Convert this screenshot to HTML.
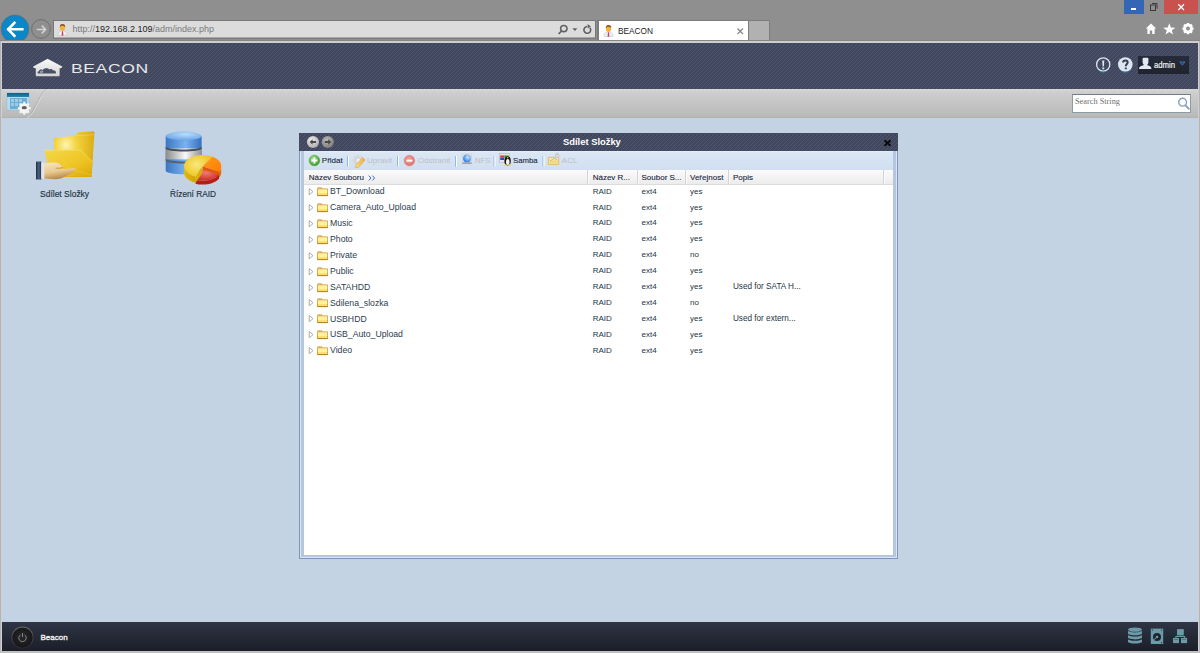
<!DOCTYPE html>
<html><head><meta charset="utf-8">
<style>
*{margin:0;padding:0;box-sizing:border-box}
html,body{width:1200px;height:653px;overflow:hidden}
body{position:relative;background:#8f8f8f;font-family:"Liberation Sans",sans-serif}
.a{position:absolute}
.t{white-space:nowrap}
#lightline{left:0;top:41px;width:1200px;height:2px;background:#cdcdcd}
#lb{left:0;top:41px;width:1px;height:612px;background:#b4b4b4}
#lb2{left:1px;top:43px;width:1px;height:610px;background:#cdd0d4}
#rb{left:1198px;top:43px;width:1px;height:610px;background:#cdd0d4}
#rb2{left:1199px;top:41px;width:1px;height:612px;background:#b4b4b4}
.stripes{background-color:#41485d;background-image:linear-gradient(135deg,#4d5570 0%,#4d5570 4.5%,#41485d 4.5%,#41485d 20.5%,#4d5570 20.5%,#4d5570 29.5%,#41485d 29.5%,#41485d 45.5%,#4d5570 45.5%,#4d5570 54.5%,#41485d 54.5%,#41485d 70.5%,#4d5570 70.5%,#4d5570 79.5%,#41485d 79.5%,#41485d 95.5%,#4d5570 95.5%,#4d5570 100%);background-size:8px 8px}
#header{left:2px;top:43px;width:1196px;height:46px}
#tbar{left:2px;top:89px;width:1196px;height:29px;background:linear-gradient(#d8d8d8 0px,#cecece 3px,#bababa 27px,#b0b0b0 29px)}
#desk{left:2px;top:118px;width:1196px;height:504px;background:#c3d3e3}
#task{left:2px;top:622px;width:1196px;height:29px;background:linear-gradient(#2f3545,#1b1e28)}
#bot{left:0;top:651px;width:1200px;height:2px;background:#c0c0c0}
.cell{position:absolute;white-space:nowrap;font-size:8px;line-height:10px;color:#243646}
.nm{position:absolute;white-space:nowrap;font-size:8.7px;line-height:10px;color:#2c3e50}
.hd{position:absolute;white-space:nowrap;font-size:8px;line-height:10px;color:#15253a;-webkit-text-stroke:0.1px #15253a}
.tb{position:absolute;white-space:nowrap;font-size:8px;line-height:10px;color:#1a2c44}
.dis{color:#bcc0c6}
</style></head><body>
<!-- browser chrome -->
<svg class="a" style="left:0;top:0" width="1200" height="41" viewBox="0 0 1200 41">
 <defs><clipPath id="cc"><rect x="0" y="0" width="1200" height="40.5"/></clipPath></defs>
 <g clip-path="url(#cc)">
  <circle cx="15" cy="29" r="14" fill="#0b86c8" stroke="#7a6a60" stroke-width="0.6"/>
 </g>
 <path d="M8.2 29.3H22.3M14.4 22.8L8.2 29.3L14.4 35.8" stroke="#fff" stroke-width="2.6" fill="none" stroke-linecap="square"/>
 <circle cx="41" cy="29" r="9.4" fill="none" stroke="#6e6e6e" stroke-width="1"/>
 <path d="M36.8 29.5H45.6M41.8 25.6L45.6 29.5L41.8 33.4" stroke="#d2d2d2" stroke-width="1.6" fill="none"/>
 <!-- address bar -->
 <rect x="53.5" y="20.5" width="542" height="17.5" fill="#dcdcdc" stroke="#777" stroke-width="1"/>
 <line x1="53" y1="38.5" x2="596" y2="38.5" stroke="#7a7a7a" stroke-width="1"/>
 <!-- search / dropdown / refresh -->
 <circle cx="563.8" cy="28.6" r="3.2" fill="none" stroke="#606060" stroke-width="1.5"/>
 <path d="M561.6 31L558.6 33.8" stroke="#606060" stroke-width="1.7"/>
 <path d="M572.4 28.2H577.4L574.9 31Z" fill="#606060"/>
 <path d="M589.9 27.7A3.4 3.4 0 1 1 587.1 26.5" fill="none" stroke="#606060" stroke-width="1.6"/>
 <path d="M587.6 24L590.9 26.4L587.6 28.6Z" fill="#606060"/>
 <!-- tab row -->
 <rect x="597" y="20" width="173" height="21" fill="#7c7c7c"/>
 <rect x="599" y="21" width="149" height="19" fill="#fff"/>
 <rect x="749" y="21" width="20" height="19" fill="#b1b1b1"/>
 <path d="M737.5 28.5L743 34M743 28.5L737.5 34" stroke="#8a8a8a" stroke-width="1.3"/>
 <!-- window controls -->
 <rect x="1124" y="0" width="20" height="14" fill="#3566b6"/>
 <rect x="1131" y="8" width="5" height="2" fill="#fff"/>
 <rect x="1150.5" y="5" width="5" height="5.5" fill="none" stroke="#3a3a3a" stroke-width="1"/>
 <path d="M1152 3.5H1157V8.5" fill="none" stroke="#3a3a3a" stroke-width="1"/>
 <rect x="1164" y="0" width="34" height="14" fill="#c9514e"/>
 <path d="M1178.3 4.3L1184 10M1184 4.3L1178.3 10" stroke="#fff" stroke-width="1.3"/>
 <!-- home star gear -->
 <path d="M1151 23.5L1145.8 28.6H1147.4V34H1149.8V30.6H1152.2V34H1154.6V28.6H1156.2Z" fill="#fff"/>
 <path d="M1169.3 23.2L1170.9 27.6L1175.4 27.7L1171.8 30.4L1173.1 34.6L1169.3 32L1165.5 34.6L1166.8 30.4L1163.2 27.7L1167.7 27.6Z" fill="#fff"/>
 <g transform="translate(1188,28.6)" fill="#fff">
  <circle r="3.9" fill="none" stroke="#fff" stroke-width="2"/>
  <g><rect x="-1.2" y="-5.6" width="2.4" height="11.2"/><rect x="-5.6" y="-1.2" width="11.2" height="2.4"/></g>
  <g transform="rotate(45)"><rect x="-1.2" y="-5.6" width="2.4" height="11.2"/><rect x="-5.6" y="-1.2" width="11.2" height="2.4"/></g>
  <circle r="2" fill="#8f8f8f"/>
 </g>
 <line x1="0" y1="40.5" x2="1200" y2="40.5" stroke="#858585" stroke-width="1"/>
</svg>
<!-- person icons -->
<svg class="a" style="left:57px;top:23px" width="11" height="13" viewBox="0 0 11 13">
 <path d="M1 12.5C1 9 2.5 8 5.5 8C8.5 8 10 9 10 12.5Z" fill="#eceff3" stroke="#b8bcc4" stroke-width="0.5"/>
 <path d="M5 8.3L6 8.3L6.4 12.5L5.5 12.7L4.6 12.5Z" fill="#d43a6a"/>
 <ellipse cx="5.5" cy="4.8" rx="2.6" ry="3.1" fill="#f3b13c"/>
 <path d="M2.8 4.5C2.6 2 3.8 1 5.5 1C7.3 1 8.4 2 8.2 4.3C7.5 3 6.5 2.8 5.5 2.8C4.3 2.8 3.3 3.2 2.8 4.5Z" fill="#8a4a1a"/>
</svg>
<svg class="a" style="left:603px;top:24px" width="11" height="13" viewBox="0 0 11 13">
 <path d="M1 12.5C1 9 2.5 8 5.5 8C8.5 8 10 9 10 12.5Z" fill="#eceff3" stroke="#b8bcc4" stroke-width="0.5"/>
 <path d="M5 8.3L6 8.3L6.4 12.5L5.5 12.7L4.6 12.5Z" fill="#d43a6a"/>
 <ellipse cx="5.5" cy="4.8" rx="2.6" ry="3.1" fill="#f3b13c"/>
 <path d="M2.8 4.5C2.6 2 3.8 1 5.5 1C7.3 1 8.4 2 8.2 4.3C7.5 3 6.5 2.8 5.5 2.8C4.3 2.8 3.3 3.2 2.8 4.5Z" fill="#8a4a1a"/>
</svg>
<div class="a t" style="left:72.5px;top:23px;font-size:9px;line-height:12px;color:#7a7a7a">http://<span style="color:#222">192.168.2.109</span>/adm/index.php</div>
<div class="a t" style="left:618px;top:24.5px;font-size:8.3px;line-height:12px;color:#222">BEACON</div>
<div class="a" id="lightline"></div>
<div class="a" id="lb"></div><div class="a" id="lb2"></div>
<div class="a" id="rb"></div><div class="a" id="rb2"></div>
<div class="a stripes" id="header"></div>
<div class="a" id="tbar"></div>
<div class="a" id="desk"></div>
<div class="a" id="task"></div>
<div class="a" id="bot"></div>
<!-- BEACON logo -->
<svg class="a" style="left:32px;top:58px" width="32" height="19" viewBox="0 0 32 19">
 <defs><linearGradient id="hg" x1="0" y1="0" x2="0" y2="1"><stop offset="0" stop-color="#fafafa"/><stop offset="1" stop-color="#d4d4d4"/></linearGradient></defs>
 <path d="M15.2 0.9Q15.6 0.7 16 0.9L30.2 8.6Q30.6 9 30 9.6L28.6 10.2Q28.2 10.4 27.6 10.1L27.6 17.6Q27.6 18.2 27 18.2H4.4Q3.8 18.2 3.8 17.6V10.1Q3.2 10.4 2.8 10.2L1.4 9.6Q0.8 9.2 1.2 8.6Z" fill="url(#hg)"/>
 <path d="M6.8 15.6C5.2 15.6 5 13.4 6.8 13.2C7.2 11.6 9.4 11 10.8 12C12 10 16 9.8 17.4 11.6C18.2 10.8 20.2 10.8 20.8 12.2C23.4 12.2 24.6 13.8 23.8 15.6Z" fill="#485066"/>
 <path d="M9.8 15C8 14.8 8 13 9.8 13C11 13 11.2 14.2 10.3 14.4" fill="none" stroke="#dadada" stroke-width="0.8"/>
</svg>
<div class="a t" style="left:71px;top:62px;font-size:12.4px;line-height:14px;color:#e8e8ea;letter-spacing:0.4px;transform:scaleX(1.42);transform-origin:left">BEACON</div>
<!-- toolbar decoration -->
<svg class="a" style="left:2px;top:89px" width="60" height="29" viewBox="0 0 60 29">
 <path d="M44.5 0C35.5 6 33.5 25 23.5 29" fill="none" stroke="#acacac" stroke-width="0.9"/>
 <path d="M45.6 0C36.6 6 34.6 25 24.6 29" fill="none" stroke="#dedede" stroke-width="0.8"/>
</svg>
<!-- calendar icon -->
<svg class="a" style="left:6px;top:92px" width="26" height="24" viewBox="0 0 26 24">
 <defs><linearGradient id="cb" x1="0" y1="0" x2="0" y2="1"><stop offset="0" stop-color="#0e5f86"/><stop offset="1" stop-color="#2a86b0"/></linearGradient></defs>
 <rect x="1" y="1" width="22" height="17" fill="#b8dcef" stroke="#8cbcd8" stroke-width="0.5"/>
 <rect x="1" y="1" width="22" height="4" fill="url(#cb)"/>
 <rect x="4" y="6" width="17" height="11" fill="#6aaed4"/>
 <g fill="#9cccea"><rect x="5" y="7" width="3" height="3"/><rect x="9" y="7" width="3" height="3"/><rect x="13" y="7" width="3" height="3"/><rect x="5" y="11" width="3" height="3"/><rect x="9" y="11" width="3" height="3"/><rect x="13" y="11" width="3" height="3"/></g>
 <g transform="translate(18.3,16.2)">
  <circle r="5.2" fill="#f4f4f4"/>
  <g fill="#f4f4f4"><rect x="-1" y="-6.5" width="2" height="13"/><rect x="-6.5" y="-1" width="13" height="2"/><g transform="rotate(45)"><rect x="-1" y="-6.5" width="2" height="13"/><rect x="-6.5" y="-1" width="13" height="2"/></g></g>
  <ellipse cx="0" cy="-0.5" rx="2.6" ry="1.6" fill="#606060"/>
 </g>
</svg>
<!-- search box -->
<div class="a" style="left:1072px;top:94px;width:119px;height:19px;background:#fff;border:1px solid #8a9ca4;border-top-color:#6d8088"></div>
<div class="a t" style="left:1075px;top:95.6px;font-family:'Liberation Serif',serif;font-size:8.3px;line-height:11px;color:#707070">Search String</div>
<svg class="a" style="left:1176px;top:96px" width="14" height="15" viewBox="0 0 14 15">
 <circle cx="6.6" cy="6.2" r="3.9" fill="none" stroke="#86a2bc" stroke-width="1.4"/>
 <path d="M9.4 9.2L12.8 12.8" stroke="#86a2bc" stroke-width="1.9" stroke-linecap="round"/>
</svg>
<!-- desktop icon 1: shared folder -->
<svg class="a" style="left:34px;top:129px" width="62" height="52" viewBox="0 0 62 52">
 <defs>
  <radialGradient id="fb" cx="0.3" cy="0.3" r="0.8"><stop offset="0" stop-color="#fdf4b0"/><stop offset="0.35" stop-color="#f2d23e"/><stop offset="1" stop-color="#d6a408"/></radialGradient>
  <linearGradient id="ff" x1="0" y1="0" x2="1" y2="1"><stop offset="0" stop-color="#f4d848"/><stop offset="0.6" stop-color="#eec424"/><stop offset="1" stop-color="#d8a80a"/></linearGradient>
  <linearGradient id="hand" x1="0" y1="0" x2="0.3" y2="1"><stop offset="0" stop-color="#f8e6c0"/><stop offset="0.6" stop-color="#e8c890"/><stop offset="1" stop-color="#b88a48"/></linearGradient>
  <linearGradient id="cuff" x1="0" y1="0" x2="1" y2="0"><stop offset="0" stop-color="#1e2e44"/><stop offset="0.5" stop-color="#4a6280"/><stop offset="1" stop-color="#22344c"/></linearGradient>
 </defs>
 <path d="M19.9 9.4Q20 8.8 20.8 8.7L42.2 6.8L43.4 4Q43.8 3.3 44.6 3.2L59.4 2.3Q60.4 2.3 60.4 3.4L57.6 47.4Q57.4 48 56.6 48L30 48L19.9 24Z" fill="url(#fb)"/>
 <path d="M42.2 6.8L59.6 5.6" fill="none" stroke="#f8e070" stroke-width="0.5"/>
 <path d="M10.4 21.2L46.6 21.1L58.4 32.6L57.4 47.5Q57.3 48.1 56.4 48.1L16.2 47Z" fill="url(#ff)"/>
 <path d="M10.4 21.2L46.6 21.1L58.4 32.6" fill="none" stroke="#f8e27a" stroke-width="0.6"/>
 <path d="M22 22L36 40L57.6 46" fill="none" stroke="#f6d650" stroke-width="0.5" opacity="0.7"/>
 <rect x="2" y="32.6" width="5.4" height="18" rx="0.6" fill="url(#cuff)"/>
 <rect x="7.2" y="33.4" width="3.4" height="16.2" fill="#e4e4e4"/>
 <path d="M10.4 34.6Q16 33.3 20 33.4Q25 33.5 29 37.6Q30 39 28 39.2Q25 39.4 21.6 39.2Q30 40.8 37 39.2Q41.6 38.6 41.8 39.8Q41 43 34 46Q27 50.4 20.6 50.2L10.4 49.4Z" fill="url(#hand)"/>
 <path d="M21.6 39.2Q26 39.6 29 38.4" fill="none" stroke="#a87a3a" stroke-width="0.6"/>
</svg>
<div class="a t" style="left:40.3px;top:189px;font-size:9.2px;line-height:10px;color:#1f3242;-webkit-text-stroke:0.15px #1f3242;transform:scaleX(0.925);transform-origin:left">Sdílet Složky</div>
<!-- desktop icon 2: RAID -->
<svg class="a" style="left:163px;top:130px" width="62" height="56" viewBox="0 0 62 56">
 <defs>
  <linearGradient id="db1" x1="0" y1="0" x2="1" y2="0"><stop offset="0" stop-color="#3a76c4"/><stop offset="0.55" stop-color="#7ab2ee"/><stop offset="1" stop-color="#3470c0"/></linearGradient>
  <linearGradient id="db2" x1="0" y1="0" x2="1" y2="0"><stop offset="0" stop-color="#8c8c8c"/><stop offset="0.55" stop-color="#f8f8f8"/><stop offset="1" stop-color="#909090"/></linearGradient>
  <radialGradient id="dbt" cx="0.55" cy="0.3" r="0.7"><stop offset="0" stop-color="#b8dcff"/><stop offset="1" stop-color="#6aa4e4"/></radialGradient>
  <radialGradient id="yt" cx="0.45" cy="0.45" r="0.6"><stop offset="0" stop-color="#f8e880"/><stop offset="1" stop-color="#eec418"/></radialGradient>
  <linearGradient id="ys" x1="0" y1="0" x2="1" y2="0"><stop offset="0" stop-color="#e8b800"/><stop offset="1" stop-color="#d8a000"/></linearGradient>
  <linearGradient id="ot" x1="0" y1="0" x2="1" y2="1"><stop offset="0" stop-color="#ffa020"/><stop offset="1" stop-color="#ff7a00"/></linearGradient>
  <linearGradient id="os" x1="0" y1="0" x2="0" y2="1"><stop offset="0" stop-color="#f07000"/><stop offset="1" stop-color="#e06000"/></linearGradient>
  <radialGradient id="rt" cx="0.45" cy="0.3" r="0.7"><stop offset="0" stop-color="#f07a7a"/><stop offset="1" stop-color="#d02a20"/></radialGradient>
 </defs>
 <path d="M2.7 6V40.5C2.7 45.5 38.6 45.5 38.6 40.5V6Z" fill="url(#db1)"/>
 <rect x="2.7" y="18.4" width="35.9" height="11" fill="url(#db2)"/>
 <path d="M2.7 16.6C2.7 20.6 38.6 20.6 38.6 16.6V18.6C38.6 22.6 2.7 22.6 2.7 18.6Z" fill="#4a5058"/>
 <path d="M2.7 28.4C2.7 32.4 38.6 32.4 38.6 28.4V30.4C38.6 34.4 2.7 34.4 2.7 30.4Z" fill="#5a6068"/>
 <ellipse cx="20.65" cy="6" rx="17.95" ry="4.4" fill="url(#dbt)"/>
 <polygon points="58.20,36.20 58.20,36.43 58.18,36.66 58.17,36.88 58.14,37.11 58.10,37.34 58.06,37.56 58.01,37.79 57.95,38.02 57.89,38.24 57.82,38.46 57.74,38.69 57.65,38.91 57.55,39.13 57.45,39.35 57.34,39.57 57.22,39.78 57.10,40.00 56.96,40.21 56.83,40.43 56.68,40.64 56.53,40.84 56.36,41.05 56.20,41.26 56.02,41.46 56.02,47.66 56.20,47.46 56.36,47.25 56.53,47.04 56.68,46.84 56.83,46.63 56.96,46.41 57.10,46.20 57.22,45.98 57.34,45.77 57.45,45.55 57.55,45.33 57.65,45.11 57.74,44.89 57.82,44.66 57.89,44.44 57.95,44.22 58.01,43.99 58.06,43.76 58.10,43.54 58.14,43.31 58.17,43.08 58.18,42.86 58.20,42.63 58.20,42.40" fill="url(#os)"/>
 <polygon points="39.60,36.20 56.02,41.46 56.02,47.66 39.60,42.40" fill="#e05a08"/>
 <polygon points="39.60,36.20 49.18,26.60 50.17,26.98 51.12,27.40 52.02,27.86 52.87,28.35 53.66,28.87 54.41,29.42 55.09,30.00 55.71,30.60 56.26,31.22 56.75,31.87 57.17,32.53 57.52,33.21 57.80,33.90 58.01,34.59 58.14,35.30 58.20,36.00 58.18,36.71 58.09,37.42 57.92,38.12 57.69,38.81 57.38,39.50 56.99,40.17 56.54,40.82 56.02,41.46" fill="url(#ot)"/>
 <polygon points="56.02,44.66 55.46,45.25 54.84,45.82 54.16,46.37 53.42,46.89 52.64,47.39 51.80,47.85 50.92,48.29 50.00,48.69 49.04,49.05 48.04,49.38 47.02,49.67 45.96,49.92 44.88,50.14 43.78,50.31 42.67,50.45 41.54,50.54 40.41,50.59 39.28,50.60 38.14,50.57 37.01,50.49 35.89,50.38 34.79,50.22 33.70,50.02 32.63,49.78 32.63,53.78 33.70,54.02 34.79,54.22 35.89,54.38 37.01,54.49 38.14,54.57 39.28,54.60 40.41,54.59 41.54,54.54 42.67,54.45 43.78,54.31 44.88,54.14 45.96,53.92 47.02,53.67 48.04,53.38 49.04,53.05 50.00,52.69 50.92,52.29 51.80,51.85 52.64,51.39 53.42,50.89 54.16,50.37 54.84,49.82 55.46,49.25 56.02,48.66" fill="#b81c14"/>
 <polygon points="39.60,39.40 56.02,44.66 55.46,45.25 54.84,45.82 54.16,46.37 53.42,46.89 52.64,47.39 51.80,47.85 50.92,48.29 50.00,48.69 49.04,49.05 48.04,49.38 47.02,49.67 45.96,49.92 44.88,50.14 43.78,50.31 42.67,50.45 41.54,50.54 40.41,50.59 39.28,50.60 38.14,50.57 37.01,50.49 35.89,50.38 34.79,50.22 33.70,50.02 32.63,49.78" fill="url(#rt)"/>
 <polygon points="32.63,46.58 31.79,46.36 30.96,46.12 30.16,45.85 29.38,45.56 28.62,45.24 27.89,44.90 27.19,44.54 26.52,44.17 25.89,43.77 25.28,43.35 24.71,42.91 24.18,42.46 23.68,42.00 23.23,41.52 22.81,41.02 22.44,40.52 22.10,40.00 21.81,39.47 21.57,38.94 21.36,38.40 21.20,37.86 21.09,37.31 21.02,36.75 21.00,36.20 21.00,42.40 21.02,42.95 21.09,43.51 21.20,44.06 21.36,44.60 21.57,45.14 21.81,45.67 22.10,46.20 22.44,46.72 22.81,47.22 23.23,47.72 23.68,48.20 24.18,48.66 24.71,49.11 25.28,49.55 25.89,49.97 26.52,50.37 27.19,50.74 27.89,51.10 28.62,51.44 29.38,51.76 30.16,52.05 30.96,52.32 31.79,52.56 32.63,52.78" fill="url(#ys)"/>
 <polygon points="39.60,36.20 32.63,46.58 32.63,52.78 39.60,42.40" fill="#dcae08"/>
 <polygon points="39.60,36.20 32.63,46.58 30.34,45.91 28.21,45.06 26.31,44.03 24.65,42.86 23.27,41.57 22.21,40.17 21.47,38.70 21.07,37.18 21.02,35.64 21.33,34.11 21.97,32.62 22.95,31.20 24.25,29.88 25.83,28.67 27.68,27.60 29.74,26.70 32.00,25.98 34.40,25.45 36.89,25.12 39.44,25.00 41.99,25.09 44.49,25.39 46.90,25.90 49.18,26.60" fill="url(#yt)"/>
</svg>
<div class="a t" style="left:169.6px;top:188.6px;font-size:9.2px;line-height:10px;color:#1f3242;-webkit-text-stroke:0.15px #1f3242;transform:scaleX(0.9);transform-origin:left">Řízení RAID</div>
<!-- dialog -->
<div class="a" style="left:299px;top:133px;width:599px;height:426px;background:#b6c6de;border:1px solid #7f96ba"></div>
<div class="a" style="left:300px;top:151px;width:597px;height:407px;border:1px solid #dbe4f0;border-top:none"></div>
<div class="a stripes" style="left:299px;top:133px;width:599px;height:18px"></div>
<div class="a" style="left:304px;top:151px;width:589px;height:404px;background:#fff"></div>
<div class="a" style="left:304px;top:151px;width:589px;height:19px;background:linear-gradient(#e6eef8 0px,#dae6f4 2px,#d1dff0 19px)"></div>
<div class="a" style="left:304px;top:170px;width:589px;height:15px;background:linear-gradient(#fbfbfb,#ececec);border-bottom:1px solid #dcdcdc"></div>

<div class="a" style="left:586.5px;top:170px;width:1px;height:14px;background:#d4d4d4"></div>
<div class="a" style="left:587.5px;top:170px;width:1px;height:14px;background:#fafafa"></div>
<div class="a" style="left:636.5px;top:170px;width:1px;height:14px;background:#d4d4d4"></div>
<div class="a" style="left:637.5px;top:170px;width:1px;height:14px;background:#fafafa"></div>
<div class="a" style="left:685.0px;top:170px;width:1px;height:14px;background:#d4d4d4"></div>
<div class="a" style="left:686.0px;top:170px;width:1px;height:14px;background:#fafafa"></div>
<div class="a" style="left:728.0px;top:170px;width:1px;height:14px;background:#d4d4d4"></div>
<div class="a" style="left:729.0px;top:170px;width:1px;height:14px;background:#fafafa"></div>
<div class="a" style="left:882.5px;top:170px;width:1px;height:14px;background:#d4d4d4"></div>
<div class="a" style="left:883.5px;top:170px;width:1px;height:14px;background:#fafafa"></div>
<svg class="a" style="left:305px;top:134px" width="32" height="16" viewBox="0 0 32 16">
 <defs><radialGradient id="nb" cx="0.4" cy="0.35" r="0.7"><stop offset="0" stop-color="#f0f0f0"/><stop offset="1" stop-color="#a8a8a8"/></radialGradient>
 <radialGradient id="nb2" cx="0.4" cy="0.35" r="0.7"><stop offset="0" stop-color="#b8b8b8"/><stop offset="1" stop-color="#7c7c7c"/></radialGradient></defs>
 <circle cx="8" cy="8" r="6.1" fill="url(#nb)"/>
 <path d="M4.6 8L7.6 5.2V6.9H11V9.1H7.6V10.8Z" fill="#4a4a4a"/>
 <circle cx="22.8" cy="8" r="6.1" fill="url(#nb2)"/>
 <path d="M26.2 8L23.2 5.2V6.9H19.8V9.1H23.2V10.8Z" fill="#4a4a4a"/>
</svg>
<div class="a t" style="left:563px;top:135.6px;font-weight:bold;font-size:9.4px;line-height:12px;color:#fff">Sdílet Složky</div>
<svg class="a" style="left:883px;top:138.5px" width="9" height="8" viewBox="0 0 9 8">
 <path d="M1.5 1.3L7.5 6.8M7.5 1.3L1.5 6.8" stroke="#0a0a0a" stroke-width="2"/>
</svg>

<svg class="a" style="left:304px;top:151px" width="280" height="19" viewBox="0 0 280 19">
 <defs><radialGradient id="gr" cx="0.4" cy="0.35" r="0.65"><stop offset="0" stop-color="#a8e890"/><stop offset="1" stop-color="#3a9a2a"/></radialGradient>
 <radialGradient id="rd" cx="0.45" cy="0.4" r="0.6"><stop offset="0" stop-color="#f6a8a2"/><stop offset="1" stop-color="#dc6e68"/></radialGradient>
 <radialGradient id="gl" cx="0.6" cy="0.35" r="0.6"><stop offset="0" stop-color="#c8e8ff"/><stop offset="1" stop-color="#3a82e0"/></radialGradient>
 <linearGradient id="pc" x1="0" y1="0" x2="1" y2="0"><stop offset="0" stop-color="#f8e070"/><stop offset="1" stop-color="#e8b040"/></linearGradient></defs>
 <circle cx="10.4" cy="9.5" r="5.3" fill="url(#gr)" stroke="#4aa838" stroke-width="0.6"/>
 <path d="M10.4 6.5V12.5M7.4 9.5H13.4" stroke="#fff" stroke-width="1.9"/>
 <g><rect x="43" y="5" width="1" height="10.5" fill="#90b8ec"/><rect x="44" y="5" width="1" height="10.5" fill="#fff"/></g>
 <g transform="translate(54.2,9.2)"><circle r="4.2" fill="#d4d6d8"/><g fill="#d4d6d8"><rect x="-1" y="-5.6" width="2" height="11.2"/><rect x="-5.6" y="-1" width="11.2" height="2"/><g transform="rotate(45)"><rect x="-1" y="-5.6" width="2" height="11.2"/><rect x="-5.6" y="-1" width="11.2" height="2"/></g></g><circle r="1.8" fill="#eef0f2"/></g>
 <path d="M51.8 14.2L58.6 6.6L61.2 8.8L54.4 16.4L51.4 16.8Z" fill="url(#pc)" stroke="#e0a060" stroke-width="0.6"/>
 <g><rect x="93" y="5" width="1" height="10.5" fill="#90b8ec"/><rect x="94" y="5" width="1" height="10.5" fill="#fff"/></g>
 <circle cx="105.4" cy="9.6" r="5.3" fill="url(#rd)" stroke="#e08a84" stroke-width="0.6"/>
 <rect x="102.4" y="8.7" width="6" height="1.9" fill="#fff"/>
 <g><rect x="151" y="5" width="1" height="10.5" fill="#90b8ec"/><rect x="152" y="5" width="1" height="10.5" fill="#fff"/></g>
 <rect x="158.6" y="3" width="8.8" height="9" fill="#e4e6e8" stroke="#c8ccd0" stroke-width="0.6"/>
 <circle cx="163" cy="7.4" r="3.9" fill="url(#gl)"/>
 <rect x="158.4" y="11.4" width="9.2" height="1.6" fill="#9aa0a4"/>
 <g><rect x="189.5" y="5" width="1" height="10.5" fill="#90b8ec"/><rect x="190.5" y="5" width="1" height="10.5" fill="#fff"/></g>
 <rect x="195.6" y="2.6" width="9.6" height="8.6" fill="#e8e8e8" stroke="#b4b4b4" stroke-width="0.6"/>
 <rect x="196.2" y="4.4" width="4" height="2.2" fill="#e03a30"/><rect x="200.2" y="4.4" width="4.4" height="2.2" fill="#3a9a3a"/>
 <rect x="196.2" y="6.6" width="4" height="2.4" fill="#2a48d0"/>
 <ellipse cx="203.6" cy="10" rx="3.2" ry="4.4" fill="#141414"/>
 <ellipse cx="203.8" cy="11" rx="1.8" ry="2.9" fill="#f4f4f4"/>
 <circle cx="203.6" cy="6.8" r="0.8" fill="#f0c020"/>
 <path d="M199.8 14.2L202.2 12.8L203 14.6Z" fill="#f0c020"/><path d="M207.6 14.2L205.2 12.8L204.4 14.6Z" fill="#f0c020"/>
 <g><rect x="238.5" y="5" width="1" height="10.5" fill="#90b8ec"/><rect x="239.5" y="5" width="1" height="10.5" fill="#fff"/></g>
 <rect x="244.3" y="6.3" width="10.4" height="7.2" fill="#f4e4b0" stroke="#e6b878" stroke-width="0.9"/>
 <rect x="245.2" y="9.2" width="8.6" height="3.6" fill="#f0dc88"/>
 <path d="M246 10L250 7.6L253 8.6" fill="none" stroke="#90b8e0" stroke-width="0.7"/>
 <rect x="251.4" y="3.8" width="3.6" height="2.8" fill="#dcdcdc" stroke="#b0b0b0" stroke-width="0.4"/>
 <path d="M252.2 3.8V2.8C252.2 1.6 254.2 1.6 254.2 2.8V3.8" fill="none" stroke="#b8b8b8" stroke-width="0.6"/>
</svg>
<div class="tb t" style="left:321.8px;top:156px;-webkit-text-stroke:0.12px #1a2c44">Přidat</div>
<div class="tb t dis" style="left:367px;top:156px">Upravit</div>
<div class="tb t dis" style="left:417.8px;top:156px">Odstranit</div>
<div class="tb t dis" style="left:474.7px;top:156px">NFS</div>
<div class="tb t" style="left:513px;top:156px;-webkit-text-stroke:0.12px #1a2c44;font-size:7.8px">Samba</div>
<div class="tb t dis" style="left:561.8px;top:156px">ACL</div>

<div class="hd t" style="left:308.7px;top:172.6px">Název Souboru</div>
<svg class="a" style="left:368px;top:175px" width="8" height="6" viewBox="0 0 8 6"><path d="M0.8 0.6L3 3L0.8 5.4M4.4 0.6L6.6 3L4.4 5.4" fill="none" stroke="#3a6ab8" stroke-width="1"/></svg>
<div class="hd t" style="left:592.7px;top:172.6px">Název R...</div>
<div class="hd t" style="left:641.5px;top:172.6px">Soubor S...</div>
<div class="hd t" style="left:690px;top:172.6px">Veřejnost</div>
<div class="hd t" style="left:732.9px;top:172.6px">Popis</div>
<svg class="a" style="left:308px;top:187.0px" width="22" height="11" viewBox="0 0 22 11">
 <path d="M1.2 1.6L5 4.7L1.2 7.8Z" fill="none" stroke="#a4a4a4" stroke-width="0.9"/>
 <path d="M9.3 2V1C9.3 0.5 9.6 0.3 10.1 0.3H13.8L14.6 1.4H19.2C19.7 1.4 20 1.7 20 2.1V8.8H9.3Z" fill="#e0b45c"/>
 <rect x="9.1" y="1.8" width="10.9" height="7.3" rx="0.7" fill="#c99838"/>
 <rect x="9.9" y="2.5" width="9.3" height="5.7" fill="#fde070"/>
 <rect x="9.9" y="2.5" width="9.3" height="1" fill="#fffbe2"/>
 <rect x="9.9" y="3.6" width="9.3" height="2.4" fill="#fff39a"/>
 <rect x="9.5" y="8" width="10.1" height="1.1" fill="#b78422"/>
</svg>
<div class="nm" style="left:330px;top:186.20px">BT_Download</div>
<div class="cell" style="left:592.7px;top:186.60px">RAID</div>
<div class="cell" style="left:641.5px;top:186.60px">ext4</div>
<div class="cell" style="left:690px;top:186.60px">yes</div>
<svg class="a" style="left:308px;top:202.92px" width="22" height="11" viewBox="0 0 22 11">
 <path d="M1.2 1.6L5 4.7L1.2 7.8Z" fill="none" stroke="#a4a4a4" stroke-width="0.9"/>
 <path d="M9.3 2V1C9.3 0.5 9.6 0.3 10.1 0.3H13.8L14.6 1.4H19.2C19.7 1.4 20 1.7 20 2.1V8.8H9.3Z" fill="#e0b45c"/>
 <rect x="9.1" y="1.8" width="10.9" height="7.3" rx="0.7" fill="#c99838"/>
 <rect x="9.9" y="2.5" width="9.3" height="5.7" fill="#fde070"/>
 <rect x="9.9" y="2.5" width="9.3" height="1" fill="#fffbe2"/>
 <rect x="9.9" y="3.6" width="9.3" height="2.4" fill="#fff39a"/>
 <rect x="9.5" y="8" width="10.1" height="1.1" fill="#b78422"/>
</svg>
<div class="nm" style="left:330px;top:202.12px">Camera_Auto_Upload</div>
<div class="cell" style="left:592.7px;top:202.52px">RAID</div>
<div class="cell" style="left:641.5px;top:202.52px">ext4</div>
<div class="cell" style="left:690px;top:202.52px">yes</div>
<svg class="a" style="left:308px;top:218.84px" width="22" height="11" viewBox="0 0 22 11">
 <path d="M1.2 1.6L5 4.7L1.2 7.8Z" fill="none" stroke="#a4a4a4" stroke-width="0.9"/>
 <path d="M9.3 2V1C9.3 0.5 9.6 0.3 10.1 0.3H13.8L14.6 1.4H19.2C19.7 1.4 20 1.7 20 2.1V8.8H9.3Z" fill="#e0b45c"/>
 <rect x="9.1" y="1.8" width="10.9" height="7.3" rx="0.7" fill="#c99838"/>
 <rect x="9.9" y="2.5" width="9.3" height="5.7" fill="#fde070"/>
 <rect x="9.9" y="2.5" width="9.3" height="1" fill="#fffbe2"/>
 <rect x="9.9" y="3.6" width="9.3" height="2.4" fill="#fff39a"/>
 <rect x="9.5" y="8" width="10.1" height="1.1" fill="#b78422"/>
</svg>
<div class="nm" style="left:330px;top:218.04px">Music</div>
<div class="cell" style="left:592.7px;top:218.44px">RAID</div>
<div class="cell" style="left:641.5px;top:218.44px">ext4</div>
<div class="cell" style="left:690px;top:218.44px">yes</div>
<svg class="a" style="left:308px;top:234.76px" width="22" height="11" viewBox="0 0 22 11">
 <path d="M1.2 1.6L5 4.7L1.2 7.8Z" fill="none" stroke="#a4a4a4" stroke-width="0.9"/>
 <path d="M9.3 2V1C9.3 0.5 9.6 0.3 10.1 0.3H13.8L14.6 1.4H19.2C19.7 1.4 20 1.7 20 2.1V8.8H9.3Z" fill="#e0b45c"/>
 <rect x="9.1" y="1.8" width="10.9" height="7.3" rx="0.7" fill="#c99838"/>
 <rect x="9.9" y="2.5" width="9.3" height="5.7" fill="#fde070"/>
 <rect x="9.9" y="2.5" width="9.3" height="1" fill="#fffbe2"/>
 <rect x="9.9" y="3.6" width="9.3" height="2.4" fill="#fff39a"/>
 <rect x="9.5" y="8" width="10.1" height="1.1" fill="#b78422"/>
</svg>
<div class="nm" style="left:330px;top:233.96px">Photo</div>
<div class="cell" style="left:592.7px;top:234.36px">RAID</div>
<div class="cell" style="left:641.5px;top:234.36px">ext4</div>
<div class="cell" style="left:690px;top:234.36px">yes</div>
<svg class="a" style="left:308px;top:250.68px" width="22" height="11" viewBox="0 0 22 11">
 <path d="M1.2 1.6L5 4.7L1.2 7.8Z" fill="none" stroke="#a4a4a4" stroke-width="0.9"/>
 <path d="M9.3 2V1C9.3 0.5 9.6 0.3 10.1 0.3H13.8L14.6 1.4H19.2C19.7 1.4 20 1.7 20 2.1V8.8H9.3Z" fill="#e0b45c"/>
 <rect x="9.1" y="1.8" width="10.9" height="7.3" rx="0.7" fill="#c99838"/>
 <rect x="9.9" y="2.5" width="9.3" height="5.7" fill="#fde070"/>
 <rect x="9.9" y="2.5" width="9.3" height="1" fill="#fffbe2"/>
 <rect x="9.9" y="3.6" width="9.3" height="2.4" fill="#fff39a"/>
 <rect x="9.5" y="8" width="10.1" height="1.1" fill="#b78422"/>
</svg>
<div class="nm" style="left:330px;top:249.88px">Private</div>
<div class="cell" style="left:592.7px;top:250.28px">RAID</div>
<div class="cell" style="left:641.5px;top:250.28px">ext4</div>
<div class="cell" style="left:690px;top:250.28px">no</div>
<svg class="a" style="left:308px;top:266.6px" width="22" height="11" viewBox="0 0 22 11">
 <path d="M1.2 1.6L5 4.7L1.2 7.8Z" fill="none" stroke="#a4a4a4" stroke-width="0.9"/>
 <path d="M9.3 2V1C9.3 0.5 9.6 0.3 10.1 0.3H13.8L14.6 1.4H19.2C19.7 1.4 20 1.7 20 2.1V8.8H9.3Z" fill="#e0b45c"/>
 <rect x="9.1" y="1.8" width="10.9" height="7.3" rx="0.7" fill="#c99838"/>
 <rect x="9.9" y="2.5" width="9.3" height="5.7" fill="#fde070"/>
 <rect x="9.9" y="2.5" width="9.3" height="1" fill="#fffbe2"/>
 <rect x="9.9" y="3.6" width="9.3" height="2.4" fill="#fff39a"/>
 <rect x="9.5" y="8" width="10.1" height="1.1" fill="#b78422"/>
</svg>
<div class="nm" style="left:330px;top:265.80px">Public</div>
<div class="cell" style="left:592.7px;top:266.20px">RAID</div>
<div class="cell" style="left:641.5px;top:266.20px">ext4</div>
<div class="cell" style="left:690px;top:266.20px">yes</div>
<svg class="a" style="left:308px;top:282.52px" width="22" height="11" viewBox="0 0 22 11">
 <path d="M1.2 1.6L5 4.7L1.2 7.8Z" fill="none" stroke="#a4a4a4" stroke-width="0.9"/>
 <path d="M9.3 2V1C9.3 0.5 9.6 0.3 10.1 0.3H13.8L14.6 1.4H19.2C19.7 1.4 20 1.7 20 2.1V8.8H9.3Z" fill="#e0b45c"/>
 <rect x="9.1" y="1.8" width="10.9" height="7.3" rx="0.7" fill="#c99838"/>
 <rect x="9.9" y="2.5" width="9.3" height="5.7" fill="#fde070"/>
 <rect x="9.9" y="2.5" width="9.3" height="1" fill="#fffbe2"/>
 <rect x="9.9" y="3.6" width="9.3" height="2.4" fill="#fff39a"/>
 <rect x="9.5" y="8" width="10.1" height="1.1" fill="#b78422"/>
</svg>
<div class="nm" style="left:330px;top:281.72px">SATAHDD</div>
<div class="cell" style="left:592.7px;top:282.12px">RAID</div>
<div class="cell" style="left:641.5px;top:282.12px">ext4</div>
<div class="cell" style="left:690px;top:282.12px">yes</div>
<div class="cell" style="left:732.9px;top:282.12px;font-size:8.2px">Used for SATA H...</div>
<svg class="a" style="left:308px;top:298.44px" width="22" height="11" viewBox="0 0 22 11">
 <path d="M1.2 1.6L5 4.7L1.2 7.8Z" fill="none" stroke="#a4a4a4" stroke-width="0.9"/>
 <path d="M9.3 2V1C9.3 0.5 9.6 0.3 10.1 0.3H13.8L14.6 1.4H19.2C19.7 1.4 20 1.7 20 2.1V8.8H9.3Z" fill="#e0b45c"/>
 <rect x="9.1" y="1.8" width="10.9" height="7.3" rx="0.7" fill="#c99838"/>
 <rect x="9.9" y="2.5" width="9.3" height="5.7" fill="#fde070"/>
 <rect x="9.9" y="2.5" width="9.3" height="1" fill="#fffbe2"/>
 <rect x="9.9" y="3.6" width="9.3" height="2.4" fill="#fff39a"/>
 <rect x="9.5" y="8" width="10.1" height="1.1" fill="#b78422"/>
</svg>
<div class="nm" style="left:330px;top:297.64px">Sdilena_slozka</div>
<div class="cell" style="left:592.7px;top:298.04px">RAID</div>
<div class="cell" style="left:641.5px;top:298.04px">ext4</div>
<div class="cell" style="left:690px;top:298.04px">no</div>
<svg class="a" style="left:308px;top:314.36px" width="22" height="11" viewBox="0 0 22 11">
 <path d="M1.2 1.6L5 4.7L1.2 7.8Z" fill="none" stroke="#a4a4a4" stroke-width="0.9"/>
 <path d="M9.3 2V1C9.3 0.5 9.6 0.3 10.1 0.3H13.8L14.6 1.4H19.2C19.7 1.4 20 1.7 20 2.1V8.8H9.3Z" fill="#e0b45c"/>
 <rect x="9.1" y="1.8" width="10.9" height="7.3" rx="0.7" fill="#c99838"/>
 <rect x="9.9" y="2.5" width="9.3" height="5.7" fill="#fde070"/>
 <rect x="9.9" y="2.5" width="9.3" height="1" fill="#fffbe2"/>
 <rect x="9.9" y="3.6" width="9.3" height="2.4" fill="#fff39a"/>
 <rect x="9.5" y="8" width="10.1" height="1.1" fill="#b78422"/>
</svg>
<div class="nm" style="left:330px;top:313.56px">USBHDD</div>
<div class="cell" style="left:592.7px;top:313.96px">RAID</div>
<div class="cell" style="left:641.5px;top:313.96px">ext4</div>
<div class="cell" style="left:690px;top:313.96px">yes</div>
<div class="cell" style="left:732.9px;top:313.96px;font-size:8.2px">Used for extern...</div>
<svg class="a" style="left:308px;top:330.28px" width="22" height="11" viewBox="0 0 22 11">
 <path d="M1.2 1.6L5 4.7L1.2 7.8Z" fill="none" stroke="#a4a4a4" stroke-width="0.9"/>
 <path d="M9.3 2V1C9.3 0.5 9.6 0.3 10.1 0.3H13.8L14.6 1.4H19.2C19.7 1.4 20 1.7 20 2.1V8.8H9.3Z" fill="#e0b45c"/>
 <rect x="9.1" y="1.8" width="10.9" height="7.3" rx="0.7" fill="#c99838"/>
 <rect x="9.9" y="2.5" width="9.3" height="5.7" fill="#fde070"/>
 <rect x="9.9" y="2.5" width="9.3" height="1" fill="#fffbe2"/>
 <rect x="9.9" y="3.6" width="9.3" height="2.4" fill="#fff39a"/>
 <rect x="9.5" y="8" width="10.1" height="1.1" fill="#b78422"/>
</svg>
<div class="nm" style="left:330px;top:329.48px">USB_Auto_Upload</div>
<div class="cell" style="left:592.7px;top:329.88px">RAID</div>
<div class="cell" style="left:641.5px;top:329.88px">ext4</div>
<div class="cell" style="left:690px;top:329.88px">yes</div>
<svg class="a" style="left:308px;top:346.2px" width="22" height="11" viewBox="0 0 22 11">
 <path d="M1.2 1.6L5 4.7L1.2 7.8Z" fill="none" stroke="#a4a4a4" stroke-width="0.9"/>
 <path d="M9.3 2V1C9.3 0.5 9.6 0.3 10.1 0.3H13.8L14.6 1.4H19.2C19.7 1.4 20 1.7 20 2.1V8.8H9.3Z" fill="#e0b45c"/>
 <rect x="9.1" y="1.8" width="10.9" height="7.3" rx="0.7" fill="#c99838"/>
 <rect x="9.9" y="2.5" width="9.3" height="5.7" fill="#fde070"/>
 <rect x="9.9" y="2.5" width="9.3" height="1" fill="#fffbe2"/>
 <rect x="9.9" y="3.6" width="9.3" height="2.4" fill="#fff39a"/>
 <rect x="9.5" y="8" width="10.1" height="1.1" fill="#b78422"/>
</svg>
<div class="nm" style="left:330px;top:345.40px">Video</div>
<div class="cell" style="left:592.7px;top:345.80px">RAID</div>
<div class="cell" style="left:641.5px;top:345.80px">ext4</div>
<div class="cell" style="left:690px;top:345.80px">yes</div>
<!-- header right -->
<svg class="a" style="left:1094px;top:55.7px" width="40" height="19" viewBox="0 0 40 19">
 <circle cx="9.2" cy="8.5" r="6.6" fill="none" stroke="#dce6f2" stroke-width="1.3"/>
 <path d="M8.2 4.4H10.3L9.9 10.4H8.6Z" fill="#dce6f2"/>
 <rect x="8.3" y="11.5" width="1.9" height="1.8" rx="0.3" fill="#dce6f2"/>
 <path d="M6.4 15.4Q9.2 16.6 12 15.4" fill="none" stroke="#2a9ad8" stroke-width="0.8"/>
 <circle cx="31.3" cy="8.5" r="7.3" fill="#dce6f2"/>
 <path d="M29.1 6.6C29.1 5.2 30 4.6 31.4 4.6C32.9 4.6 33.7 5.4 33.7 6.5C33.7 8 31.8 8.2 31.8 10.2" fill="none" stroke="#363d52" stroke-width="2"/>
 <rect x="30.8" y="11.4" width="2" height="1.9" rx="0.4" fill="#363d52"/>
 <path d="M28.6 15.6Q31.3 16.6 34 15.6" fill="none" stroke="#2a9ad8" stroke-width="0.8"/>
</svg>
<div class="a" style="left:1138px;top:56px;width:51px;height:18px;background:linear-gradient(#262b3a,#20242f)"></div>
<svg class="a" style="left:1138px;top:56px" width="51" height="18" viewBox="0 0 51 18">
 <path d="M4.6 2.6Q4.6 1.7 5.6 1.7H9.4Q10.4 1.7 10.4 2.6V6.2Q10.4 7.6 9.4 8.4V9.2Q13.4 9.8 13.4 12.9H1Q1 9.8 5.6 9.2V8.4Q4.6 7.6 4.6 6.2Z" fill="#dfe8f4"/>
 <path d="M41.8 5.9H47L44.4 9.2Z" fill="#174a8c" stroke="#5a8ac4" stroke-width="0.6"/>
</svg>
<div class="a t" style="left:1154.4px;top:60px;font-size:9.2px;line-height:10px;color:#f2f2f2;-webkit-text-stroke:0.2px #f2f2f2;transform:scaleX(0.84);transform-origin:left">admin</div>
<!-- taskbar -->
<svg class="a" style="left:10px;top:625px" width="26" height="26" viewBox="0 0 26 26">
 <defs><radialGradient id="pw" cx="0.5" cy="0.45" r="0.55"><stop offset="0" stop-color="#2a2a2c"/><stop offset="1" stop-color="#161618"/></radialGradient>
 <linearGradient id="pr" x1="0" y1="0" x2="0" y2="1"><stop offset="0" stop-color="#6a6a6e"/><stop offset="1" stop-color="#2a2a2e"/></linearGradient></defs>
 <circle cx="12.5" cy="12.5" r="11" fill="url(#pr)"/>
 <circle cx="12.5" cy="12.6" r="10.2" fill="url(#pw)"/>
 <path d="M10.5 9.8A3.7 3.7 0 1 0 14.5 9.8" fill="none" stroke="#8e8e8e" stroke-width="0.9"/>
 <path d="M12.5 8V12" stroke="#8e8e8e" stroke-width="0.9"/>
</svg>
<div class="a t" style="left:40.5px;top:633px;font-size:8px;line-height:10px;color:#f4f4f4;-webkit-text-stroke:0.3px #f4f4f4">Beacon</div>
<svg class="a" style="left:1126px;top:626px" width="64" height="20" viewBox="0 0 64 20">
 <g fill="#6c9aa6">
  <ellipse cx="9" cy="3.6" rx="7" ry="2.2"/>
  <path d="M2 4.6C2 7 16 7 16 4.6V7.4C16 9.8 2 9.8 2 7.4Z"/>
  <path d="M2 8.8C2 11.2 16 11.2 16 8.8V11.6C16 14 2 14 2 11.6Z"/>
  <path d="M2 13C2 15.4 16 15.4 16 13V15.8C16 18.2 2 18.2 2 15.8Z"/>
  <rect x="24.8" y="2.6" width="12.4" height="15.4"/>
 </g>
 <g fill="#1f2330">
  <circle cx="31" cy="11" r="4"/>
  <circle cx="26.4" cy="4" r="0.6"/><circle cx="35.6" cy="4" r="0.6"/><circle cx="35.6" cy="16.6" r="0.6"/>
 </g>
 <circle cx="31" cy="11" r="1.3" fill="#6c9aa6"/>
 <path d="M27 14.6L31 11" stroke="#6c9aa6" stroke-width="1"/>
 <g fill="#6c9aa6">
  <rect x="51" y="3.1" width="6.8" height="6.3"/>
  <rect x="47" y="12" width="6" height="5.1"/>
  <rect x="55" y="12" width="6.1" height="5.1"/>
  <path d="M54 9.4V10.1H49.4V12H50.4V11H58.2V12H59.2V10.1H54.8V9.4Z"/>
 </g>
 <rect x="48" y="13.2" width="4" height="0.6" fill="#3a5a66"/>
 <rect x="56" y="13.2" width="4" height="0.6" fill="#3a5a66"/>
</svg>
</body></html>
